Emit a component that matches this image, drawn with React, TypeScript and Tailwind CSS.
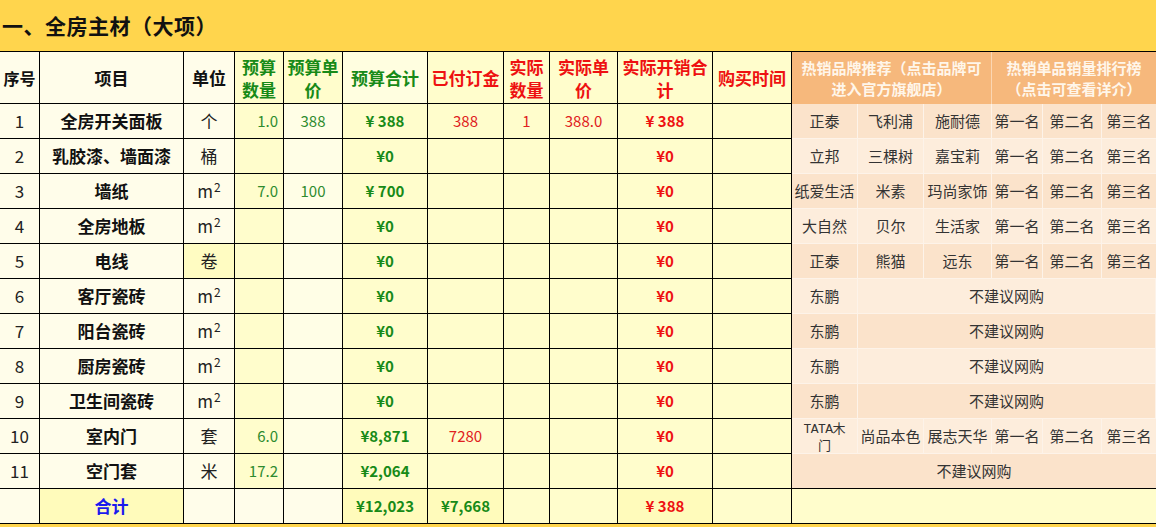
import React from "react";

type Row = {
  n: string;
  item: string;
  unit: React.ReactNode;
  unitHl?: boolean;
  qty: string;
  price: string;
  total: string;
  paid: string;
  aq: string;
  ap: string;
  at: string;
};

const M2 = (
  <span>
    m<span className="text-[12px] relative -top-[6px] ml-[1px]">2</span>
  </span>
);

const rows: Row[] = [
  { n: "1", item: "全房开关面板", unit: "个", qty: "1.0", price: "388", total: "¥ 388", paid: "388", aq: "1", ap: "388.0", at: "¥ 388" },
  { n: "2", item: "乳胶漆、墙面漆", unit: "桶", qty: "", price: "", total: "¥0", paid: "", aq: "", ap: "", at: "¥0" },
  { n: "3", item: "墙纸", unit: M2, qty: "7.0", price: "100", total: "¥ 700", paid: "", aq: "", ap: "", at: "¥0" },
  { n: "4", item: "全房地板", unit: M2, qty: "", price: "", total: "¥0", paid: "", aq: "", ap: "", at: "¥0" },
  { n: "5", item: "电线", unit: "卷", unitHl: true, qty: "", price: "", total: "¥0", paid: "", aq: "", ap: "", at: "¥0" },
  { n: "6", item: "客厅瓷砖", unit: M2, qty: "", price: "", total: "¥0", paid: "", aq: "", ap: "", at: "¥0" },
  { n: "7", item: "阳台瓷砖", unit: M2, qty: "", price: "", total: "¥0", paid: "", aq: "", ap: "", at: "¥0" },
  { n: "8", item: "厨房瓷砖", unit: M2, qty: "", price: "", total: "¥0", paid: "", aq: "", ap: "", at: "¥0" },
  { n: "9", item: "卫生间瓷砖", unit: M2, qty: "", price: "", total: "¥0", paid: "", aq: "", ap: "", at: "¥0" },
  { n: "10", item: "室内门", unit: "套", qty: "6.0", price: "", total: "¥8,871", paid: "7280", aq: "", ap: "", at: "¥0" },
  { n: "11", item: "空门套", unit: "米", qty: "17.2", price: "", total: "¥2,064", paid: "", aq: "", ap: "", at: "¥0" },
];

type Brand = { cells: (string | React.ReactNode)[]; span?: "five" | "six" };

const brands: Brand[] = [
  { cells: ["正泰", "飞利浦", "施耐德", "第一名", "第二名", "第三名"] },
  { cells: ["立邦", "三棵树", "嘉宝莉", "第一名", "第二名", "第三名"] },
  { cells: ["纸爱生活", "米素", "玛尚家饰", "第一名", "第二名", "第三名"] },
  { cells: ["大自然", "贝尔", "生活家", "第一名", "第二名", "第三名"] },
  { cells: ["正泰", "熊猫", "远东", "第一名", "第二名", "第三名"] },
  { cells: ["东鹏", "不建议网购"], span: "five" },
  { cells: ["东鹏", "不建议网购"], span: "five" },
  { cells: ["东鹏", "不建议网购"], span: "five" },
  { cells: ["东鹏", "不建议网购"], span: "five" },
  {
    cells: [
      <span key="t" className="text-[13px] leading-[15px] text-center block">
        <span className="font-[family-name:Liberation_Mono,monospace] tracking-[-0.5px]">TATA</span>木
        <br />门
      </span>,
      "尚品本色",
      "展志天华",
      "第一名",
      "第二名",
      "第三名",
    ],
  },
  { cells: ["不建议网购"], span: "six" },
];

const base = "flex items-center justify-center border-r border-b border-black";
const cream = "bg-[#fffdea]";
const ylw = "bg-[#fffdcc]";
const ylwHi = "bg-[#fffbbb]";

function BrandRow({ b, idx }: { b: Brand; idx: number }) {
  const bg = idx % 2 === 0 ? "bg-[#fbe3cb]" : "bg-[#fdeddc]";
  const bc = `flex items-center justify-center border-r border-b border-[#fdf3e9] text-[15px] text-[#333] ${bg}`;
  if (b.span === "six") {
    return <div className={`col-span-6 flex items-center justify-center border-b border-black text-[15px] text-[#333] ${bg}`}>{b.cells[0]}</div>;
  }
  if (b.span === "five") {
    return (
      <>
        <div className={bc}>{b.cells[0]}</div>
        <div className={`col-span-5 ${bc}`}>{b.cells[1]}</div>
      </>
    );
  }
  return (
    <>
      {b.cells.map((c, i) => (
        <div key={i} className={`${bc} ${i === 5 ? "border-r-0" : ""} whitespace-nowrap`}>
          {c}
        </div>
      ))}
    </>
  );
}

export default function App() {
  return (
    <div className="w-[1156px] h-[527px] overflow-hidden bg-white font-[family-name:Noto_Sans_CJK_SC,Noto_Sans,sans-serif] text-[#222]">
      <div className="h-[51px] bg-[#ffd54d] flex items-center pl-[2px]">
        <span className="text-[21px] font-bold tracking-[0.5px] text-[#111]">一、全房主材（大项）</span>
      </div>
      <div className="grid grid-cols-[40px_144px_51px_49px_59px_85px_76px_46px_68px_95px_79px_66px_66px_68px_51px_59px_54px] grid-rows-[52px_repeat(12,35px)] border-t border-black">
        {/* header */}
        <div className={`${base} ${cream} text-[16px] font-bold text-[#111]`}>序号</div>
        <div className={`${base} ${cream} text-[17px] font-bold text-[#111]`}>项目</div>
        <div className={`${base} ${cream} text-[17px] font-bold text-[#111]`}>单位</div>
        <div className={`${base} ${ylw} text-[17px] font-bold text-[#178a17] leading-[23px] text-center`}>预算<br />数量</div>
        <div className={`${base} ${ylw} text-[17px] font-bold text-[#178a17] leading-[23px] text-center`}>预算单<br />价</div>
        <div className={`${base} bg-[#fffee0] text-[17px] font-bold text-[#178a17]`}>预算合计</div>
        <div className={`${base} ${ylw} text-[17px] font-bold text-[#ee1111]`}>已付订金</div>
        <div className={`${base} ${ylw} text-[17px] font-bold text-[#ee1111] leading-[23px] text-center`}>实际<br />数量</div>
        <div className={`${base} ${ylw} text-[17px] font-bold text-[#ee1111] leading-[23px] text-center`}>实际单<br />价</div>
        <div className={`${base} ${ylw} text-[17px] font-bold text-[#ee1111] leading-[23px] text-center`}>实际开销合<br />计</div>
        <div className={`${base} ${ylw} text-[17px] font-bold text-[#ee1111]`}>购买时间</div>
        <div className="col-span-3 flex items-center justify-center text-center bg-[#f6b87c] border-r border-[#fbd6b2] text-[15px] font-bold leading-[21px] text-[#fff6ea]">
          热销品牌推荐（点击品牌可<br />进入官方旗舰店）
        </div>
        <div className="col-span-3 flex items-center justify-center text-center bg-[#f6b87c] text-[15px] font-bold leading-[21px] text-[#fff6ea]">
          热销单品销量排行榜<br />（点击可查看详介）
        </div>

        {rows.map((r, i) => (
          <React.Fragment key={r.n}>
            <div className={`${base} ${cream} text-[17px]`}>{r.n}</div>
            <div className={`${base} ${cream} text-[17px] font-bold text-[#111]`}>{r.item}</div>
            <div className={`${base} ${r.unitHl ? "bg-[#fffcc2]" : cream} text-[17px]`}>{r.unit}</div>
            <div className={`${base} ${ylw} justify-end pr-[5px] text-[15px] text-[#2e8b2e]`}>{r.qty}</div>
            <div className={`${base} bg-[#fffee6] text-[15px] text-[#2e8b2e]`}>{r.price}</div>
            <div className={`${base} ${ylw} text-[15px] font-bold text-[#178a17] whitespace-pre`}>{r.total}</div>
            <div className={`${base} ${ylw} text-[15px] text-[#e02020]`}>{r.paid}</div>
            <div className={`${base} ${ylw} text-[15px] text-[#e02020]`}>{r.aq}</div>
            <div className={`${base} ${ylw} text-[15px] text-[#e02020]`}>{r.ap}</div>
            <div className={`${base} ${ylw} text-[15px] font-bold text-[#ee1111] whitespace-pre`}>{r.at}</div>
            <div className={`${base} ${ylw}`}></div>
            <BrandRow b={brands[i]} idx={i} />
          </React.Fragment>
        ))}

        {/* total row */}
        <div className={`${base} ${cream}`}></div>
        <div className={`${base} ${ylwHi} text-[17px] font-bold text-[#1a1aee]`}>合计</div>
        <div className={`${base} ${cream}`}></div>
        <div className={`${base} ${cream}`}></div>
        <div className={`${base} ${cream}`}></div>
        <div className={`${base} ${ylwHi} text-[15px] font-bold text-[#178a17]`}>¥12,023</div>
        <div className={`${base} ${ylwHi} text-[15px] font-bold text-[#178a17]`}>¥7,668</div>
        <div className={`${base} ${ylw}`}></div>
        <div className={`${base} ${ylw}`}></div>
        <div className={`${base} ${ylwHi} text-[15px] font-bold text-[#ee1111] whitespace-pre`}>¥ 388</div>
        <div className={`${base} ${ylw}`}></div>
        <div className={`col-span-6 border-b border-black ${ylw}`}></div>
      </div>
      <div className="h-[3px] bg-[#ffd54d]"></div>
    </div>
  );
}
